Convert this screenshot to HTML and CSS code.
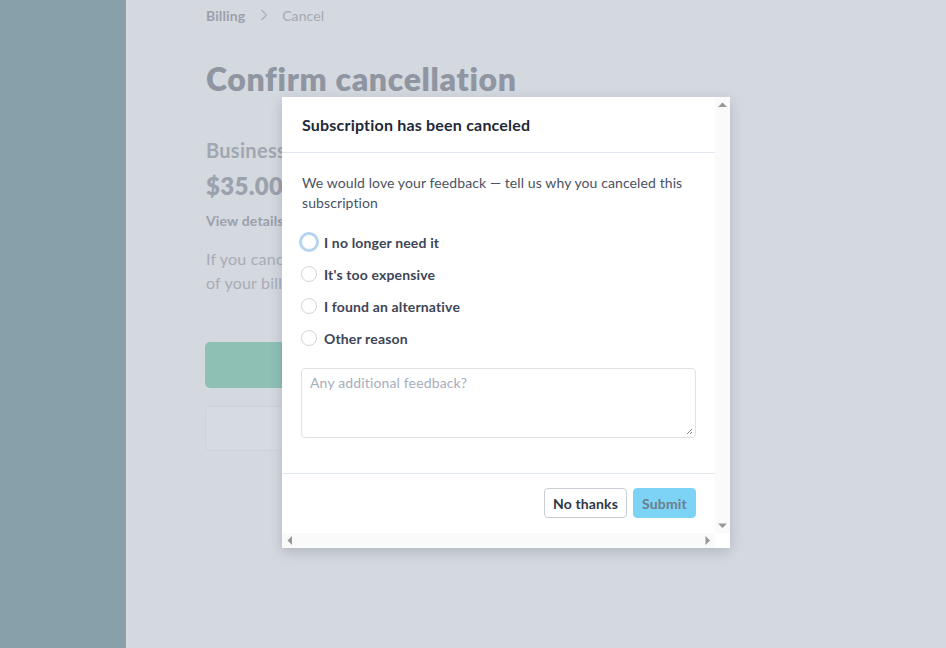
FILE: index.html
```html
<!DOCTYPE html>
<html lang="en">
<head>
<meta charset="utf-8">
<title>Confirm cancellation</title>
<link rel="stylesheet" href="styles.css">
</head>
<body>
<div class="app">
  <aside class="sidebar"></aside>
  <main class="main">
    <nav class="crumbs">
      <span class="crumb-strong">Billing</span>
      <svg class="chev" width="12" height="12" viewBox="0 0 12 12"><path d="M3.5 1l5 5-5 5" fill="none" stroke="currentColor" stroke-width="1.1"/></svg>
      <span class="crumb">Cancel</span>
    </nav>
    <h1 class="title">Confirm cancellation</h1>
    <div class="plan">Business</div>
    <div class="price">$35.00</div>
    <div class="details">View details</div>
    <p class="note">If you cancel<br>of your billing</p>
    <div class="btn-primary"></div>
    <div class="btn-secondary"></div>
  </main>
</div>

<div class="modal">
  <div class="modal-inner">
    <div class="modal-head">Subscription has been canceled</div>
    <div class="modal-body">
      <p class="lead">We would love your feedback — tell us why you canceled this subscription</p>
      <div class="options">
        <label class="opt"><span class="radio focus"></span>I no longer need it</label>
        <label class="opt"><span class="radio"></span>It's too expensive</label>
        <label class="opt"><span class="radio"></span>I found an alternative</label>
        <label class="opt"><span class="radio"></span>Other reason</label>
      </div>
      <div class="textarea">
        <span class="placeholder">Any additional feedback?</span>
        <svg class="grip" width="8" height="8" viewBox="0 0 8 8"><path d="M7 2L2 7M7 5L5 7" stroke="#6b7280" stroke-width="0.9"/></svg>
      </div>
    </div>
    <div class="modal-foot">
      <button class="btn-ghost">No thanks</button>
      <button class="btn-submit">Submit</button>
    </div>
  </div>
  <div class="vbar">
    <svg width="15" height="15" viewBox="0 0 15 15"><path d="M3 10L7.5 5.5L12 10Z" fill="#979797"/></svg>
    <svg width="15" height="15" viewBox="0 0 15 15"><path d="M3 5.5L7.5 10L12 5.5Z" fill="#979797"/></svg>
  </div>
  <div class="hbar">
    <svg width="15" height="15" viewBox="0 0 15 15"><path d="M10 3L5.5 7.5L10 12Z" fill="#979797"/></svg>
    <svg width="15" height="15" viewBox="0 0 15 15"><path d="M5.5 3L10 7.5L5.5 12Z" fill="#979797"/></svg>
  </div>
  <div class="corner"></div>
</div>
</body>
</html>
```
FILE: styles.css
```css
* { box-sizing: border-box; }
html, body { margin: 0; padding: 0; }
body {
  width: 946px;
  height: 648px;
  overflow: hidden;
  font-family: "Lato", "Noto Sans", sans-serif;
  background: #d4d8df;
}
.app { display: flex; height: 648px; }
.sidebar { width: 126px; background: #88a0aa; flex: none; }
.main { flex: 1; padding: 5px 0 0 80px; color: #9aa0ab; }
.crumbs { display: flex; align-items: center; font-size: 14px; height: 20px; letter-spacing: 0.1px; }
.crumb-strong { font-weight: 700; color: #9ba1ac; }
.crumb { color: #a3a9b3; margin-left: 12px; }
.chev { color: #a9aeb8; margin-left: 13px; }
.title { margin: 34px 0 0; font-size: 32px; font-weight: 800; color: #8f96a2; line-height: 40px; letter-spacing: 0.65px; }
.plan { margin-top: 37px; font-size: 20px; font-weight: 700; color: #a1a7b2; line-height: 28px; letter-spacing: 0.3px; }
.price { margin-top: 6px; font-size: 24px; font-weight: 800; color: #9ca2ad; line-height: 32px; letter-spacing: 0.3px; }
.details { margin-top: 9px; font-size: 14px; font-weight: 700; color: #9aa0ab; line-height: 20px; letter-spacing: 0.15px; }
.note { margin: 16px 0 0; font-size: 16px; line-height: 24px; color: #a7adb7; letter-spacing: 0.2px; }
.btn-primary { margin-top: 47px; width: 340px; height: 46px; border-radius: 5px; background: #8fc0b4; margin-left: -1px; }
.btn-secondary { margin-top: 18px; width: 340px; height: 45px; border-radius: 5px; border: 1px solid #cdd2da; background: #d6dae1; margin-left: -1px; }

.modal {
  position: absolute;
  left: 282px;
  top: 97px;
  width: 448px;
  height: 451px;
  background: #ffffff;
  display: grid;
  grid-template-columns: 433px 15px;
  grid-template-rows: 436px 15px;
  box-shadow: 0 4px 12px rgba(30, 40, 60, 0.18);
  letter-spacing: 0.15px;
}
.modal-inner { overflow: hidden; }
.modal-head {
  height: 56px;
  padding: 0 20px;
  display: flex;
  align-items: center;
  font-size: 16px;
  font-weight: 700;
  color: #1f2937;
  letter-spacing: 0.2px;
  border-bottom: 1px solid #e2e8f0;
}
.modal-body { padding: 20px 19px 35px 19px; }
.lead { margin: 0 0 0 1px; font-size: 14px; line-height: 20px; color: #4a5262; letter-spacing: 0.1px; }
.options { margin-top: 19px; display: flex; flex-direction: column; gap: 12px; }
.opt { display: flex; align-items: center; gap: 7px; height: 20px; font-size: 14px; font-weight: 700; color: #3d4556; }
.radio { width: 16px; height: 16px; border-radius: 50%; border: 1px solid #d1d5db; background: #fff; flex: none; }
.radio.focus { border-color: #bcd6ee; box-shadow: 0 0 0 2px #b3d4f0; }
.textarea {
  position: relative;
  margin-top: 20px;
  height: 70px;
  border: 1px solid #dfe3e8;
  border-radius: 4px;
  padding: 3px 8px;
}
.placeholder { font-size: 14px; line-height: 20px; color: #a6aebb; }
.grip { position: absolute; right: 2px; bottom: 2px; }
.modal-foot {
  border-top: 1px solid #e2e8f0;
  padding: 14px 19px 15px;
  display: flex;
  justify-content: flex-end;
  gap: 6px;
}
.btn-ghost, .btn-submit {
  font-family: inherit;
  letter-spacing: 0.15px;
  height: 30px;
  padding: 0;
  font-size: 14px;
  font-weight: 700;
  border-radius: 4px;
  white-space: nowrap;
}
.btn-ghost { background: #fff; border: 1px solid #c9ced6; color: #2f3747; width: 83px; }
.btn-submit { background: #7dd3f5; border: 1px solid #7dd3f5; color: #6e7d8c; width: 63px; }

.vbar {
  background: #fafafa;
  display: flex;
  flex-direction: column;
  justify-content: space-between;
}
.hbar {
  background: #fafafa;
  display: flex;
  justify-content: space-between;
}
.vbar svg, .hbar svg { display: block; }
.corner { background: #ffffff; }
```
